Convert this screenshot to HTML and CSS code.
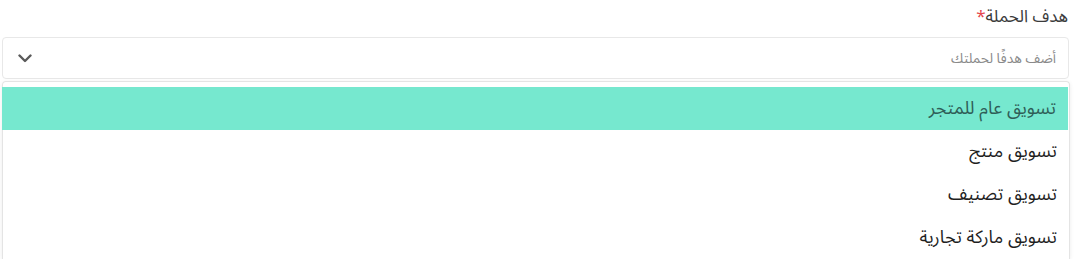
FILE: index.html
```html
<!DOCTYPE html>
<html lang="ar" dir="rtl">
<head>
    <meta charset="UTF-8">
    <meta name="viewport" content="width=device-width, initial-scale=1.0">
    <title>هدف الحملة</title>
    <link rel="stylesheet" href="styles.css">
</head>
<body>

    <div class="field">
        <label class="field-label">هدف الحملة<span class="required">*</span></label>

        <div class="select-box">
            <span class="placeholder">أضف هدفًا لحملتك</span>
            <svg class="chevron" width="14" height="9" viewBox="0 0 14 9">
                <path d="M1.5 1.5 L7 7 L12.5 1.5" fill="none" stroke="#5a5a5a" stroke-width="2.4" stroke-linecap="round" stroke-linejoin="round"/>
            </svg>
        </div>

        <ul class="options">
            <li class="option active">تسويق عام للمتجر</li>
            <li class="option">تسويق منتج</li>
            <li class="option">تسويق تصنيف</li>
            <li class="option">تسويق ماركة تجارية</li>
        </ul>
    </div>

</body>
</html>
```

FILE: styles.css
```css
body {
    font-family: "Noto Sans Arabic", "DejaVu Sans", sans-serif;
    background-color: #ffffff;
    margin: 0;
    padding: 0;
    overflow: hidden;
}

.field {
    padding: 4px 13px 0 2px;
}

.field-label {
    display: block;
    font-size: 17px;
    line-height: 26px;
    color: #3b3b3b;
    padding-right: 1px;
    margin-bottom: 7px;
}

.required {
    color: #e5484d;
}

.select-box {
    height: 40px;
    border: 1px solid #e8e8e8;
    border-radius: 4px;
    display: flex;
    align-items: center;
    justify-content: space-between;
    padding: 0 12px 0 15px;
}

.placeholder {
    font-size: 13.7px;
    color: #8a8a8a;
}

.chevron {
    display: block;
}

.options {
    list-style: none;
    margin: 2px -1px 0 0;
    padding: 5px 0 0 0;
    border: 1px solid #e4e4e4;
    border-bottom: none;
    border-radius: 4px 4px 0 0;
    box-shadow: 0 1px 4px rgba(0, 0, 0, 0.08);
}

.option {
    height: 43px;
    line-height: 43px;
    padding: 0 12px;
    font-size: 18px;
    color: #1f1f1f;
    margin-left: -1px;
}

.option.active {
    background-color: #76e8cf;
    color: #2f5e58;
    margin-right: 1px;
}
```
